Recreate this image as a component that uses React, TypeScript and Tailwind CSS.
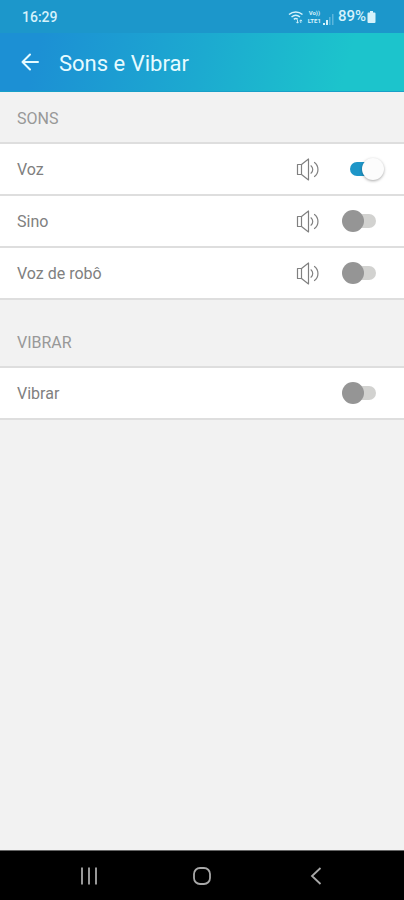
import { useState } from 'react'

interface SettingRowProps {
  id: string
  label: string
  checked: boolean
  hasPreview?: boolean
  onChange: (id: string) => void
}

function SpeakerIcon() {
  return (
    <svg
      className="h-6 w-6"
      viewBox="0 0 24 24"
      fill="none"
      stroke="currentColor"
      strokeWidth="1.2"
      strokeLinejoin="round"
      strokeLinecap="round"
    >
      <path d="M1.5 7.500h4v10h-4z" />
      <path d="M5.500 7.500l7-5.500v21l-7-5.500" />
      <path d="M15 8.800c2.300 2 2.300 5.400 0 7.400" />
      <path d="M18.500 5.500c4.600 3.600 4.600 10.400 0 14" />
    </svg>
  )
}

function SettingRow({ id, label, checked, hasPreview, onChange }: SettingRowProps) {
  return (
    <li className="flex h-[52px] items-center border-b-2 border-[#dedede] bg-white pl-[17px] pr-5">
      <label htmlFor={id} className="flex-1 pt-0.5 text-base text-[#808080]">
        {label}
      </label>
      {hasPreview && (
        <button type="button" aria-label={`Ouvir ${label}`} className="mr-[22px] text-[#808080]">
          <SpeakerIcon />
        </button>
      )}
      <input
        id={id}
        type="checkbox"
        checked={checked}
        onChange={() => onChange(id)}
        className="relative h-[22px] w-[42px] cursor-pointer appearance-none before:absolute before:inset-x-2 before:inset-y-1 before:rounded-full before:bg-[#d2d2d0] before:content-[''] after:absolute after:left-0 after:top-0 after:size-[22px] after:rounded-full after:bg-[#959595] after:content-[''] checked:before:bg-[#1e96c8] checked:after:left-5 checked:after:bg-[#fcfcfc] checked:after:shadow-[0_1px_3px_rgba(0,0,0,0.35)]"
      />
    </li>
  )
}

function StatusBar() {
  return (
    <div className="flex h-[33px] items-center justify-between bg-[#1c97cb] pl-[22px] pr-7 text-[#d5f2fb]">
      <span className="text-sm font-medium">16:29</span>
      <div className="flex items-center gap-1">
        <svg className="h-4 w-4" viewBox="0 0 16 16" fill="none" stroke="currentColor" strokeWidth="1.5">
          <path d="M1 5.500c4-3.500 9.500-3.500 13.500 0" />
          <path d="M3.500 8c2.500-2 6-2 8.500 0" />
          <path d="M5.800 10.300c1.200-.9 2.700-.9 3.900 0" />
          <path d="M9.500 11v3M8.300 12.800l1.200 1.400 1.200-1.400M12.800 14v-3M11.600 12.200l1.200-1.400 1.200 1.400" strokeWidth="0.9" />
        </svg>
        <div className="flex items-end gap-px">
          <div className="flex flex-col text-center text-[6px] leading-[8px] font-bold">
            <span>Vo))</span>
            <span>LTE1</span>
          </div>
          <svg className="h-3 w-3" viewBox="0 0 12 12" fill="currentColor">
            <path d="M1 10h2v2H1zM4 7h2v5H4z" />
            <path d="M7 4h1.500v8H7zM10 1h1.500v11H10z" opacity="0.35" />
          </svg>
        </div>
        <div className="flex items-center gap-px">
          <span className="text-[15px] font-medium">89%</span>
          <svg className="h-3 w-[9px]" viewBox="0 0 9 12" fill="currentColor">
            <path d="M3 0h3v1.500h1.500q1 0 1 1v8.500q0 1-1 1h-6q-1 0-1-1V2.500q0-1 1-1H3z" />
          </svg>
        </div>
      </div>
    </div>
  )
}

function NavigationBar() {
  return (
    <nav className="flex h-[50px] items-center justify-around border-t border-[#666666] bg-black px-8 text-[#a8a8a8]">
      <button type="button" aria-label="Recentes">
        <svg className="h-5 w-5" viewBox="0 0 20 20" fill="none" stroke="currentColor" strokeWidth="1.800">
          <path d="M3 1.500v17M10 1.500v17M17 1.500v17" />
        </svg>
      </button>
      <button type="button" aria-label="Início">
        <svg className="h-5 w-5" viewBox="0 0 20 20" fill="none" stroke="currentColor" strokeWidth="1.800">
          <rect x="2" y="2" width="16" height="16" rx="6" />
        </svg>
      </button>
      <button type="button" aria-label="Voltar">
        <svg className="h-5 w-5" viewBox="0 0 20 20" fill="none" stroke="currentColor" strokeWidth="1.800">
          <path d="M15.500 2L7 10l8.500 8" />
        </svg>
      </button>
    </nav>
  )
}

const sounds = [
  { id: 'voz', label: 'Voz' },
  { id: 'sino', label: 'Sino' },
  { id: 'robo', label: 'Voz de robô' },
]

export default function App() {
  const [enabled, setEnabled] = useState<string[]>(['voz'])

  const toggle = (id: string) => {
    setEnabled((prev) =>
      prev.includes(id) ? prev.filter((item) => item !== id) : [...prev, id]
    )
  }

  return (
    <div className="flex min-h-screen flex-col bg-[#f2f2f2] font-['Roboto','Noto_Sans',sans-serif]">
      <StatusBar />
      <header className="flex h-[59px] items-center gap-[18px] border-b border-[#18a0c8] bg-linear-[105deg] from-[#1c90d4] from-10% via-[#1caad0] via-50% to-[#1cc4cc] to-85% pl-[21px] text-[#e6fbff]">
        <button type="button" aria-label="Voltar">
          <svg
            className="h-5 w-5"
            viewBox="0 0 20 20"
            fill="none"
            stroke="currentColor"
            strokeWidth="2"
            strokeLinecap="round"
            strokeLinejoin="round"
          >
            <path d="M17 10H1.500M9 2.500L1.500 10l7.500 7.500" />
          </svg>
        </button>
        <h1 className="pt-0.5 text-[22px]">Sons e Vibrar</h1>
      </header>

      <main className="flex-1">
        <h2 className="flex h-[52px] items-center border-b-2 border-[#dedede] pl-[17px] pt-1 text-base text-[#989898]">
          SONS
        </h2>
        <ul>
          {sounds.map((sound) => (
            <SettingRow
              key={sound.id}
              id={sound.id}
              label={sound.label}
              checked={enabled.includes(sound.id)}
              hasPreview
              onChange={toggle}
            />
          ))}
        </ul>
        <h2 className="mt-4 flex h-[52px] items-center border-b-2 border-[#dedede] pl-[17px] pt-1 text-base text-[#989898]">
          VIBRAR
        </h2>
        <ul>
          <SettingRow
            id="vibrar"
            label="Vibrar"
            checked={enabled.includes('vibrar')}
            onChange={toggle}
          />
        </ul>
      </main>

      <NavigationBar />
    </div>
  )
}
